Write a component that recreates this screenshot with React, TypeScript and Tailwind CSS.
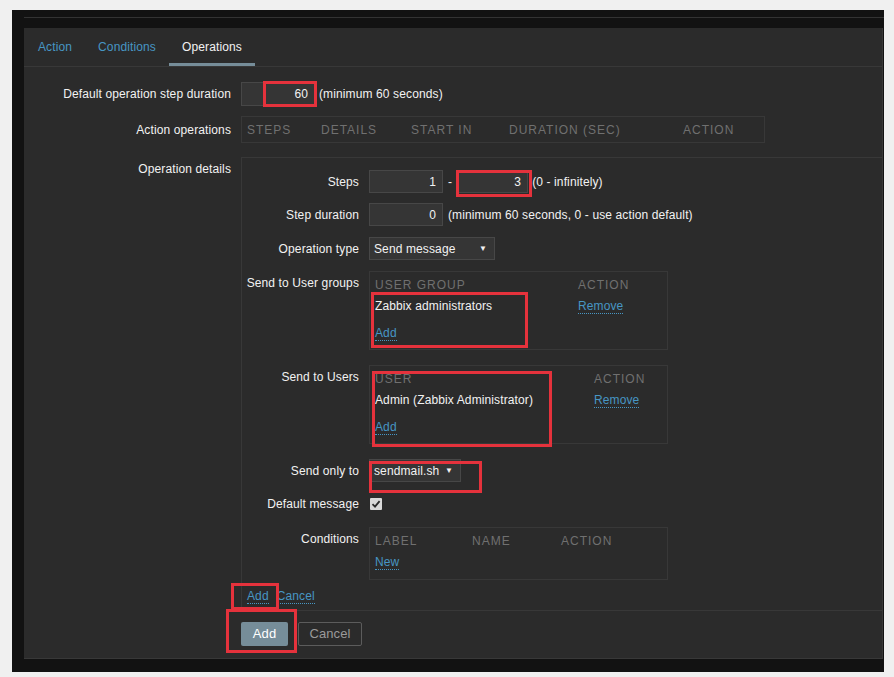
import React from "react";

const Link = ({ children, className = "" }: { children: React.ReactNode; className?: string }) => (
  <span className={`text-[#4796c4] border-b border-dotted border-[#4796c4] leading-[13px] inline-block ${className}`}>{children}</span>
);

const Input = ({ value, w }: { value: string; w: string }) => (
  <div className={`${w} h-[23px] bg-[#353535] border border-[#474747] flex items-center justify-end pr-[6px] text-[#f2f2f2]`}>{value}</div>
);

const Select = ({ value, w }: { value: string; w: string }) => (
  <div className={`${w} h-[23px] bg-[#353535] border border-[#474747] flex items-center justify-between pl-[4px] pr-[7px] text-[#f2f2f2]`}>
    <span>{value}</span>
    <span className="text-[8px] leading-none">▼</span>
  </div>
);

const Th = ({ children }: { children: React.ReactNode }) => (
  <div className="uppercase text-[#707070] tracking-[1px] leading-[14px]">{children}</div>
);

const Red = ({ x, y, w, h }: { x: number; y: number; w: number; h: number }) => (
  <div className="absolute border-[3px] border-[#e5323c] pointer-events-none" style={{ left: x, top: y, width: w, height: h }} />
);

export default function App() {
  return (
    <div className="relative w-[894px] h-[677px] bg-[#f0f0f0] pt-[10px] pl-[12px] font-['Liberation_Sans',Arial,sans-serif] text-[12px] leading-[14px] tracking-[0.12px] text-[#f2f2f2] overflow-hidden">
      <div className="w-[872px] h-[662px] bg-[#121212] flex flex-col">
        <div className="h-[7px] shrink-0" />
        <div className="ml-[12px] h-px bg-[#333333] shrink-0" />
        <div className="h-[10px] shrink-0" />
        <div className="ml-[12px] w-[859px] h-[631px] bg-[#2b2b2b] border-b border-r border-[#383838] flex flex-col">
          {/* tabs */}
          <div className="h-[39px] flex border-b border-[#383838] shrink-0 pl-px">
            <div className="px-[13px] flex items-center border-b-[3px] border-transparent pt-[3px] text-[#4796c4]">Action</div>
            <div className="px-[13px] flex items-center border-b-[3px] border-transparent pt-[3px] text-[#4796c4]">Conditions</div>
            <div className="px-[13px] flex items-center border-b-[3px] border-[#768d99] pt-[3px] text-[#f2f2f2]">Operations</div>
          </div>

          {/* form */}
          <div className="flex flex-col pt-[15px]">
            <div className="flex items-center h-[24px]">
              <div className="w-[207px] text-right">Default operation step duration</div>
              <div className="ml-[10px] flex items-center">
                <Input value="60" w="w-[74px] h-[24px]" />
                <span className="ml-[4px]">(minimum 60 seconds)</span>
              </div>
            </div>

            <div className="flex items-center mt-[10px]">
              <div className="w-[207px] text-right">Action operations</div>
              <div className="ml-[10px] w-[524px] h-[27px] border border-[#383838] grid grid-cols-[74px_90px_98px_174px_1fr] items-center px-[5px]">
                <Th>Steps</Th>
                <Th>Details</Th>
                <Th>Start in</Th>
                <Th>Duration (sec)</Th>
                <Th>Action</Th>
              </div>
            </div>

            <div className="flex mt-[14px]">
              <div className="w-[207px] text-right pt-[5px]">Operation details</div>
              <div className="ml-[10px] flex-1 border-l border-t border-b border-[#383838] flex flex-col h-[454px]">
                {/* Steps */}
                <div className="flex items-center mt-[12px] h-[23px]">
                  <div className="w-[117px] text-right">Steps</div>
                  <div className="ml-[10px] flex items-center">
                    <Input value="1" w="w-[74px]" />
                    <span className="mx-[5px]">-</span>
                    <Input value="3" w="w-[71px]" />
                    <span className="ml-[4px]">(0 - infinitely)</span>
                  </div>
                </div>
                {/* Step duration */}
                <div className="flex items-center mt-[10px] h-[23px]">
                  <div className="w-[117px] text-right">Step duration</div>
                  <div className="ml-[10px] flex items-center">
                    <Input value="0" w="w-[74px]" />
                    <span className="ml-[5px]">(minimum 60 seconds, 0 - use action default)</span>
                  </div>
                </div>
                {/* Operation type */}
                <div className="flex items-center mt-[11px] h-[23px]">
                  <div className="w-[117px] text-right">Operation type</div>
                  <div className="ml-[10px]">
                    <Select value="Send message" w="w-[126px]" />
                  </div>
                </div>
                {/* User groups */}
                <div className="flex mt-[11px]">
                  <div className="w-[117px] text-right pt-[5px]">Send to User groups</div>
                  <div className="ml-[10px] w-[299px] h-[79px] border border-[#383838] px-[5px] pt-[6px]">
                    <div className="grid grid-cols-[203px_1fr]">
                      <Th>User group</Th>
                      <Th>Action</Th>
                    </div>
                    <div className="grid grid-cols-[203px_1fr] mt-[7px]">
                      <div>Zabbix administrators</div>
                      <div><Link>Remove</Link></div>
                    </div>
                    <div className="mt-[12px]"><Link>Add</Link></div>
                  </div>
                </div>
                {/* Users */}
                <div className="flex mt-[15px]">
                  <div className="w-[117px] text-right pt-[5px]">Send to Users</div>
                  <div className="ml-[10px] w-[299px] h-[79px] border border-[#383838] px-[5px] pt-[6px]">
                    <div className="grid grid-cols-[219px_1fr]">
                      <Th>User</Th>
                      <Th>Action</Th>
                    </div>
                    <div className="grid grid-cols-[219px_1fr] mt-[7px]">
                      <div>Admin (Zabbix Administrator)</div>
                      <div><Link>Remove</Link></div>
                    </div>
                    <div className="mt-[12px]"><Link>Add</Link></div>
                  </div>
                </div>
                {/* Send only to */}
                <div className="flex items-center mt-[15px] h-[23px]">
                  <div className="w-[117px] text-right">Send only to</div>
                  <div className="ml-[10px]">
                    <Select value="sendmail.sh" w="w-[92px]" />
                  </div>
                </div>
                {/* Default message */}
                <div className="flex items-center mt-[12px] h-[20px]">
                  <div className="w-[117px] text-right">Default message</div>
                  <div className="ml-[11px] w-[12px] h-[12px] bg-[#d9d9d9] rounded-[1px] flex items-center justify-center">
                    <svg width="10" height="10" viewBox="0 0 10 10">
                      <path d="M1.5 5.2 L4 7.6 L8.6 2.2" stroke="#2b2b2b" strokeWidth="1.8" fill="none" />
                    </svg>
                  </div>
                </div>
                {/* Conditions */}
                <div className="flex mt-[13px]">
                  <div className="w-[117px] text-right pt-[5px]">Conditions</div>
                  <div className="ml-[10px] w-[299px] h-[53px] border border-[#383838] px-[5px] pt-[6px]">
                    <div className="grid grid-cols-[97px_89px_1fr]">
                      <Th>Label</Th>
                      <Th>Name</Th>
                      <Th>Action</Th>
                    </div>
                    <div className="mt-[7px]"><Link>New</Link></div>
                  </div>
                </div>
                {/* links */}
                <div className="mt-[10px] pl-[5px] flex">
                  <Link>Add</Link>
                  <Link className="ml-[8px]">Cancel</Link>
                </div>
              </div>
            </div>

            {/* footer buttons */}
            <div className="flex mt-[11px] pl-[217px]">
              <div className="w-[47px] h-[24px] bg-[#768d99] rounded-[2px] flex items-center justify-center text-white text-[13px]">Add</div>
              <div className="ml-[10px] w-[64px] h-[24px] border border-[#5c5c5c] rounded-[2px] flex items-center justify-center text-[#9a9a9a] text-[13px]">Cancel</div>
            </div>
          </div>
        </div>
      </div>

      <Red x={263} y={81} w={54} h={26} />
      <Red x={456} y={170} w={76} h={27} />
      <Red x={371} y={292} w={157} h={56} />
      <Red x={372} y={371} w={180} h={76} />
      <Red x={369} y={461} w={113} h={32} />
      <Red x={231} y={583} w={48} h={27} />
      <Red x={226} y={609} w={71} h={44} />
    </div>
  );
}
